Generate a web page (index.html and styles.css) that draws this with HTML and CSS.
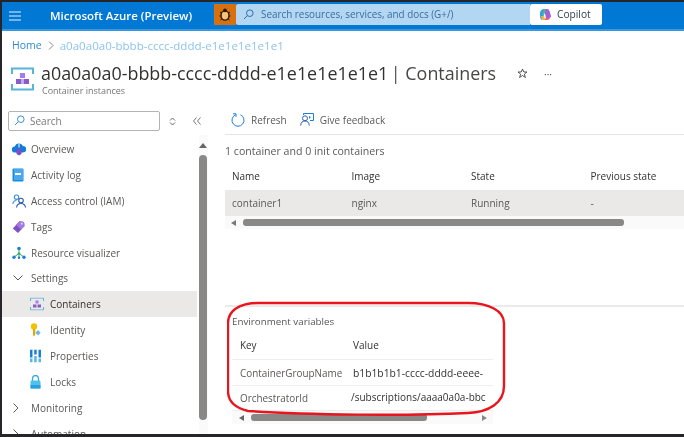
FILE: index.html
```html
<!DOCTYPE html>
<html lang="en">
<head>
<meta charset="utf-8">
<title>Containers</title>
<link rel="stylesheet" href="styles.css">
</head>
<body>
<div class="window">
  <header class="topbar">
    <svg class="burger" width="12" height="10" viewBox="0 0 12 10"><path d="M0 1h12M0 5h12M0 9h12" stroke="#e6f2fb" stroke-width="1"/></svg>
    <span class="brand">Microsoft Azure (Preview)</span>
    <span class="bug">
      <svg width="14" height="14" viewBox="0 0 14 14"><ellipse cx="7" cy="8.500" rx="4" ry="4.600" fill="#f4c27a" stroke="#2a1a08" stroke-width="1.400"/><circle cx="7" cy="3.300" r="1.900" fill="#2a1a08"/><path d="M2 5l2 1.500M12 5l-2 1.500M1.500 9H3M12.500 9H11M2.500 13l1.700-1.500M11.500 13l-1.700-1.500" stroke="#2a1a08" stroke-width="1"/></svg>
    </span>
    <div class="globalsearch">
      <svg width="11" height="11" viewBox="0 0 11 11"><circle cx="6.800" cy="4.200" r="3.300" fill="none" stroke="#2f6ea8"/><path d="M4.300 6.700L1 10" stroke="#2f6ea8"/></svg>
      <span>Search resources, services, and docs (G+/)</span>
    </div>
    <div class="copilot">
      <svg width="13" height="13" viewBox="0 0 13 13"><path d="M1 4.500Q2 1 5 1h2L4.500 8 3 12Q1 11 1 8z" fill="#2f9fe0"/><path d="M5 1h3q2 0 2.500 2L12 8q0 2-3 2H7z" fill="#a45fd8"/><path d="M2 8h3l1 2.500-1 1.500H3z" fill="#f5b63c"/><path d="M7 10h2q2 0 2.500-2-.5 4-3.500 4H5z" fill="#ee5d6c"/><path d="M5 1h2L5 7H3z" fill="#43c08c"/></svg>
      <span>Copilot</span>
    </div>
  </header>

  <nav class="crumbs">
    <a class="crumb-home">Home</a>
    <svg width="6" height="9" viewBox="0 0 6 9"><path d="M1 .5l4 4-4 4" fill="none" stroke="#8a8886"/></svg>
    <a class="crumb-current">a0a0a0a0-bbbb-cccc-dddd-e1e1e1e1e1e1</a>
  </nav>

  <section class="pagehead">
    <svg class="resicon" width="23" height="24" viewBox="0 0 23 24">
      <path d="M1 7V1.500h21V7M1 17v5.500h21V17" fill="none" stroke="#59b4d9" stroke-width="2"/>
      <path d="M9 6h5v5H9z" fill="#a67af4"/>
      <path d="M5 12h5v5H5zM13 12h5v5h-5z" fill="#8a5cc7"/>
      <path d="M10 12h3v5h-3z" fill="#c5a8ee"/>
    </svg>
    <div class="headtext">
      <div class="titleline">
        <h1>a0a0a0a0-bbbb-cccc-dddd-e1e1e1e1e1e1 <span class="titlebar">|</span> <span class="titlesub">Containers</span></h1>
        <svg class="star" width="11" height="11" viewBox="0 0 11 11"><path d="M5.500 1l1.300 3h3.200L7.400 6.100l1 3.400-2.900-2-2.900 2 1-3.400L1 4h3.200z" fill="none" stroke="#444" stroke-width=".9"/></svg>
        <span class="dots">···</span>
      </div>
      <div class="subtitle">Container instances</div>
    </div>
  </section>

  <div class="columns">
    <aside class="sidebar">
      <div class="sidetools">
        <div class="sidesearch">
          <svg width="11" height="11" viewBox="0 0 11 11"><circle cx="6.800" cy="4.200" r="3.300" fill="none" stroke="#3b8fd6"/><path d="M4.300 6.700L1 10" stroke="#3b8fd6"/></svg>
          <span>Search</span>
        </div>
        <svg class="sorter" width="7" height="9" viewBox="0 0 7 9"><path d="M1 3.500l2.500-2.500L6 3.500M1 5.500L3.500 8 6 5.500" fill="none" stroke="#666"/></svg>
        <svg class="collapse" width="8" height="8" viewBox="0 0 8 8"><path d="M3.500.5L.5 4l3 3.500M7.500.5L4.500 4l3 3.500" fill="none" stroke="#777"/></svg>
      </div>
      <ul class="menu">
        <li class="item">
          <svg class="ico" width="14" height="15" viewBox="0 0 14 15"><path d="M3 11a3 3 0 0 1-.3-6A4.500 4.500 0 0 1 11 4.500 3.200 3.200 0 0 1 11 11z" fill="#0f7ddb"/><path d="M4.500 8L7 6.500 9.500 8v4.500L7 14l-2.500-1.500z" fill="#7d4fc4"/><path d="M7 2.500v3.500" stroke="#fff"/></svg>
          Overview</li>
        <li class="item">
          <svg class="ico" width="12" height="14" viewBox="0 0 12 14"><rect x="0.500" y="0.500" width="11" height="13" rx="1" fill="#1b8bdf"/><rect x="2" y="1" width="9" height="11" fill="#4aa9ec"/><rect x="3" y="5" width="6" height="2" fill="#fff"/></svg>
          Activity log</li>
        <li class="item">
          <svg class="ico" width="14" height="14" viewBox="0 0 14 14"><circle cx="4.500" cy="3.200" r="2.200" fill="none" stroke="#3b8fd6" stroke-width="1.100"/><path d="M.8 10q.5-3.500 3.700-3.500" fill="none" stroke="#3b8fd6" stroke-width="1.100"/><circle cx="9" cy="6.500" r="2.300" fill="none" stroke="#2b5fb0" stroke-width="1.100"/><path d="M4.500 13.500q.5-4 4.500-4t4.500 4" fill="none" stroke="#2b5fb0" stroke-width="1.100"/></svg>
          Access control (IAM)</li>
        <li class="item">
          <svg class="ico" width="13" height="13" viewBox="0 0 13 13"><path d="M7.500.8L12 1.500l.5 4-6.500 7L.8 8z" fill="#8050c8"/><path d="M7.500.8L12 1.500l.5 4L9 9 4 4.300z" fill="#a37ae0"/><circle cx="9.800" cy="3.300" r="1" fill="#e8dcf8"/></svg>
          Tags</li>
        <li class="item">
          <svg class="ico" width="14" height="13" viewBox="0 0 14 13"><path d="M7 2v5M7 7l-5 3.500M7 7l5 3.500M7 7v4" stroke="#3aa56d" stroke-width="1" fill="none"/><circle cx="7" cy="2" r="1.800" fill="#1b7fd6"/><circle cx="7" cy="7" r="1.300" fill="#2eae73"/><circle cx="2" cy="10.800" r="1.700" fill="#1b7fd6"/><circle cx="12" cy="10.800" r="1.700" fill="#1b7fd6"/><circle cx="7" cy="11.300" r="1.200" fill="#1b7fd6"/></svg>
          Resource visualizer</li>
        <li class="item group">
          <svg class="chev" width="10" height="6" viewBox="0 0 10 6"><path d="M.5.500L5 5 9.500.500" fill="none" stroke="#555"/></svg>
          Settings</li>
        <li class="item sub selected">
          <svg class="ico" width="14" height="13" viewBox="0 0 14 13"><path d="M.5 3.500V.5h13v3M.5 9.500v3h13v-3" fill="none" stroke="#59b4d9"/><path d="M5.500 3h3v3h-3z" fill="#a67af4"/><path d="M3 7h3.500v3H3zM7.500 7H11v3H7.500z" fill="#8a5cc7"/></svg>
          Containers</li>
        <li class="item sub">
          <svg class="ico" width="11" height="14" viewBox="0 0 11 14"><circle cx="4" cy="3.500" r="3.200" fill="#f2c200"/><path d="M3 6h2.200v6L4 13.500 3 12z" fill="#e4a900"/><path d="M8 7l2.700 2.700L8 12.400 5.300 9.700z" fill="#6fb9e3"/></svg>
          Identity</li>
        <li class="item sub">
          <svg class="ico" width="11" height="13" viewBox="0 0 11 13"><path d="M0 0h2.500v8H0zM4.200 0h2.500v5H4.200zM8.500 0H11v8H8.500z" fill="#1b7fd6"/><path d="M0 9h2.500v4H0zM4.200 6.500h2.500V13H4.200zM8.500 9H11v4H8.500z" fill="#58b6e8"/></svg>
          Properties</li>
        <li class="item sub">
          <svg class="ico" width="11" height="14" viewBox="0 0 11 14"><path d="M2.500 6V3.500a3 3 0 0 1 6 0V6" fill="none" stroke="#36a5e0" stroke-width="1.300"/><rect x="0.500" y="5.500" width="10" height="8" rx="1.200" fill="#4cc3ee"/><rect x="0.500" y="10" width="10" height="3.500" fill="#2a9fdc"/></svg>
          Locks</li>
        <li class="item group">
          <svg class="chev" width="6" height="10" viewBox="0 0 6 10"><path d="M.5.500L5 5 .5 9.500" fill="none" stroke="#555"/></svg>
          Monitoring</li>
        <li class="item group">
          <svg class="chev" width="6" height="10" viewBox="0 0 6 10"><path d="M.5.500L5 5 .5 9.500" fill="none" stroke="#555"/></svg>
          Automation</li>
      </ul>
      <div class="vscroll">
        <span class="vscroll-up"></span>
        <span class="vscroll-thumb"></span>
      </div>
    </aside>

    <main class="content">
      <div class="toolbar">
        <span class="tool">
          <svg width="14" height="14" viewBox="0 0 14 14"><path d="M4.500 1.800A6 6 0 1 0 9.500 1.800" fill="none" stroke="#1b7fd6" stroke-width="1"/><path d="M2 .8h3v3" fill="none" stroke="#1b7fd6" stroke-width="1"/></svg>
          Refresh</span>
        <span class="tool">
          <svg width="14" height="13" viewBox="0 0 14 13"><path d="M3.500 2V.5h10v7H10" fill="none" stroke="#1b7fd6"/><path d="M9 3l2 1-2 2" fill="#1b7fd6"/><circle cx="5" cy="5.300" r="2.500" fill="none" stroke="#2b5fb0"/><path d="M.7 12.500q.3-4.500 4.300-4.500t4.300 4.500" fill="none" stroke="#2b5fb0"/></svg>
          Give feedback</span>
      </div>
      <p class="count">1 container and 0 init containers</p>
      <div class="grid headrow">
        <span>Name</span><span>Image</span><span>State</span><span>Previous state</span>
      </div>
      <div class="grid datarow">
        <span>container1</span><span>nginx</span><span>Running</span><span>-</span>
      </div>
      <div class="hscroll">
        <span class="arrow-left"></span>
        <span class="hscroll-thumb"></span>
      </div>

      <section class="envpanel">
        <h2>Environment variables</h2>
        <div class="envtable">
          <div class="envrow envhead"><span class="k">Key</span><span class="v">Value</span></div>
          <div class="envrow"><span class="k">ContainerGroupName</span><span class="v strong">b1b1b1b1-cccc-dddd-eeee-</span></div>
          <div class="envrow envlast"><span class="k">OrchestratorId</span><span class="v strong shift">/subscriptions/aaaa0a0a-bbc</span></div>
          <div class="envscroll">
            <span class="arrow-left dark"></span>
            <span class="envscroll-thumb"></span>
            <span class="arrow-right"></span>
          </div>
        </div>
      </section>
    </main>
  </div>

  <svg class="annotation" width="282" height="120" viewBox="0 0 282 120">
    <path d="M31 2H241C262 2 277 10 277 22V85C277 102 262 111 241 112C180 115 80 114 21 110C8 107 1 100 1 90V22C1 10 12 2 31 2Z" fill="none" stroke="#e8141e" stroke-width="2.400"/>
  </svg>
</div>
</body>
</html>
```

FILE: styles.css
```css
* { box-sizing: border-box; }
html, body { margin: 0; height: 100%; }
body {
  width: 684px;
  height: 437px;
  overflow: hidden;
  background: #26262a;
  font-family: "Open Sans", "Noto Sans", "Liberation Sans", sans-serif;
  font-size: 10px;
  color: #5a5856;
}
.window {
  position: relative;
  margin: 2px 0 0 2px;
  width: 682px;
  height: 432px;
  background: #fff;
  overflow: hidden;
  filter: blur(0.35px);
}
.topbar {
  height: 29px;
  display: flex;
  align-items: center;
  background: #0078d4;
  border-bottom: 2px solid #3a96dd;
  padding-left: 7px;
}
.burger { flex: none; }
.brand {
  margin-left: 29px;
  width: 164px;
  flex: none;
  color: #fff;
  font-size: 11.500px;
  font-weight: 600;
  white-space: nowrap;
}
.bug {
  width: 22px;
  height: 21px;
  background: #d8700d;
  display: flex;
  align-items: center;
  justify-content: center;
  flex: none;
  margin-top: -3px;
}
.globalsearch {
  width: 294px;
  height: 21px;
  flex: none;
  margin-top: -3px;
  background: #b3d6f2;
  display: flex;
  align-items: center;
  gap: 7px;
  padding-left: 7px;
  color: #3b6e9c;
  font-size: 9.900px;
  border-radius: 2px 0 0 2px;
}
.copilot {
  width: 72px;
  height: 21px;
  flex: none;
  margin-top: -3px;
  background: #fff;
  border-radius: 2px;
  display: flex;
  align-items: center;
  gap: 5px;
  padding-left: 9px;
  color: #2c3e50;
  font-size: 10.200px;
}
.crumbs {
  height: 28px;
  display: flex;
  align-items: center;
  gap: 6px;
  padding-left: 10px;
  font-size: 10.500px;
}
.crumb-home { color: #2f8ad8; }
.crumb-current { color: #8cc4ee; font-size: 11.550px; }
.pagehead {
  height: 42px;
  display: flex;
  align-items: flex-start;
  padding-left: 9px;
  padding-top: 4px;
}
.resicon { flex: none; margin-top: 4px; }
.headtext { margin-left: 7px; }
.titleline { display: flex; align-items: center; height: 21px; }
h1 {
  margin: 0;
  font-size: 17.900px;
  font-weight: 400;
  color: #323130;
  white-space: nowrap;
  line-height: 21px;
  word-spacing: -2px;
}
.titlebar { color: #555; }
.titlesub { color: #484644; margin-left: 2px; }
.star { margin-left: 21px; flex: none; }
.dots { margin-left: 16px; color: #555; font-size: 10px; }
.subtitle {
  font-size: 9px;
  color: #757575;
  line-height: 12px;
  margin-top: 1px;
  margin-left: 1px;
}
.columns {
  display: flex;
  height: 333px;
}
.sidebar {
  position: relative;
  width: 223px;
  flex: none;
  overflow: hidden;
  padding-top: 10px;
}
.sidetools {
  display: flex;
  align-items: center;
  padding-left: 6px;
  height: 20px;
}
.sidesearch {
  width: 152px;
  height: 20px;
  border: 1px solid #b5b3b1;
  border-radius: 2px;
  display: flex;
  align-items: center;
  gap: 5px;
  padding-left: 5px;
  padding-bottom: 1px;
  color: #777;
  font-size: 10px;
  flex: none;
}
.sorter { margin-left: 9px; flex: none; }
.collapse { margin-left: 17px; flex: none; }
.menu {
  list-style: none;
  margin: 5px 0 0;
  padding: 0;
  width: 195px;
}
.item {
  height: 25.900px;
  display: flex;
  align-items: center;
  padding-left: 29px;
  position: relative;
  white-space: nowrap;
}
.ico, .chev {
  position: absolute;
  left: 10px;
  top: 50%;
  transform: translateY(-50%);
}
.chev { left: 11px; }
.sub { padding-left: 48px; }
.sub .ico { left: 28px; }
.selected { background: #ebe9e7; color: #323130; }
.vscroll {
  position: absolute;
  left: 197px;
  top: 34px;
  width: 9px;
  height: 299px;
  background: #fafafa;
}
.vscroll-up {
  position: absolute;
  left: 0;
  top: 8px;
  border-left: 4px solid transparent;
  border-right: 4px solid transparent;
  border-bottom: 5px solid #666;
}
.vscroll-thumb {
  position: absolute;
  left: 0;
  top: 20px;
  width: 8px;
  height: 265px;
  background: #8a8886;
  border-radius: 4px;
}
.content {
  flex: 1;
  min-width: 0;
  position: relative;
}
.toolbar {
  height: 34px;
  display: flex;
  align-items: center;
  gap: 13px;
  padding-left: 6px;
  padding-top: 4px;
  border-bottom: 1px solid #e5e5e5;
}
.tool {
  display: flex;
  align-items: center;
  gap: 6px;
}
.count {
  margin: 0;
  height: 30px;
  line-height: 32px;
  font-size: 10.600px;
  white-space: nowrap;
}
.grid {
  display: grid;
  grid-template-columns: 119.500px 119.500px 119.500px 1fr;
  align-items: center;
  padding-left: 7px;
  white-space: nowrap;
}
.headrow { height: 25px; padding-bottom: 3px; color: #323130; }
.datarow { height: 26px; background: #ebe9e7; }
.hscroll {
  height: 13px;
  display: flex;
  align-items: center;
  background: #fafafa;
  padding-left: 6px;
}
.arrow-left {
  border-top: 3.500px solid transparent;
  border-bottom: 3.500px solid transparent;
  border-right: 5px solid #777;
}
.arrow-left.dark { border-right-color: #666; }
.arrow-right {
  border-top: 3.500px solid transparent;
  border-bottom: 3.500px solid transparent;
  border-left: 5px solid #888;
}
.hscroll-thumb {
  margin-left: 7px;
  width: 381px;
  height: 7px;
  background: #8a8886;
  border-radius: 3px;
}
.envpanel {
  margin-top: 76px;
  border-top: 2px solid #eaeaea;
  padding: 8px 0 0 7px;
  height: 129px;
}
h2 {
  margin: 0;
  font-size: 9.800px;
  font-weight: 400;
  color: #555;
  line-height: 14px;
}
.envtable {
  width: 261px;
  margin-top: 3px;
}
.envrow {
  display: flex;
  align-items: center;
  height: 26px;
  border-bottom: 1px solid #eee;
  white-space: nowrap;
  overflow: hidden;
  padding-left: 8px;
}
.envhead { height: 28px; padding-bottom: 2px; color: #323130; font-weight: 500; }
.envlast { height: 25px; }
.k { width: 113px; flex: none; font-size: 9.900px; color: #5a5856; }
.envhead .k, .envhead .v { color: #323130; }
.v { flex: none; color: #323130; font-size: 10px; }
.strong { font-weight: 500; font-size: 10.300px; }
.shift { margin-left: -2px; margin-top: -2px; font-size: 10px; }
.envscroll {
  height: 13px;
  display: flex;
  align-items: center;
  background: #fafafa;
  padding-left: 7px;
}
.envscroll-thumb {
  margin-left: 7px;
  width: 176px;
  height: 7px;
  background: #8a8886;
  border-radius: 3px;
}
.envscroll .arrow-right { margin-left: 55px; }
.annotation {
  position: absolute;
  left: 225px;
  top: 299px;
  pointer-events: none;
}
```
